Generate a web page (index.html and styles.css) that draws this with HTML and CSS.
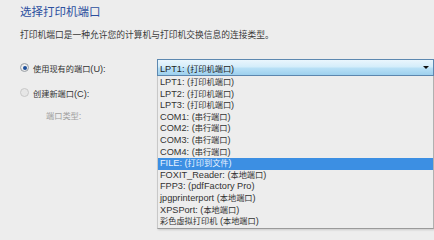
FILE: index.html
```html
<!DOCTYPE html>
<html lang="zh-CN">
<head>
<meta charset="utf-8">
<link rel="stylesheet" href="styles.css">
</head>
<body>
<div class="page">
  <h1 class="title">选择打印机端口</h1>
  <p class="desc">打印机端口是一种允许您的计算机与打印机交换信息的连接类型。</p>
  <div class="form">
    <div class="left">
      <div class="row row-first"><span class="radio checked"></span><span class="label"><span class="cj">使用现有的端口</span>(U):</span></div>
      <div class="row row-second"><span class="radio"></span><span class="label"><span class="cj">创建新端口</span>(C):</span></div>
      <div class="row-type"><span class="cj">端口类型</span>:</div>
    </div>
    <div class="right">
      <div class="combo"><span class="combo-text">LPT1: (<span class="cj">打印机端口</span>)</span><span class="arrow"></span></div>
      <ul class="list">
        <li>LPT1: (<span class="cj">打印机端口</span>)</li>
        <li>LPT2: (<span class="cj">打印机端口</span>)</li>
        <li>LPT3: (<span class="cj">打印机端口</span>)</li>
        <li>COM1: (<span class="cj">串行端口</span>)</li>
        <li>COM2: (<span class="cj">串行端口</span>)</li>
        <li>COM3: (<span class="cj">串行端口</span>)</li>
        <li>COM4: (<span class="cj">串行端口</span>)</li>
        <li class="sel">FILE: (<span class="cj">打印到文件</span>)</li>
        <li>FOXIT_Reader: (<span class="cj">本地端口</span>)</li>
        <li>FPP3: (pdfFactory Pro)</li>
        <li>jpgprinterport (<span class="cj">本地端口</span>)</li>
        <li>XPSPort: (<span class="cj">本地端口</span>)</li>
        <li><span class="cj">彩色虚拟打印机</span> (<span class="cj">本地端口</span>)</li>
      </ul>
    </div>
  </div>
</div>
</body>
</html>
```
FILE: styles.css
```css
* { box-sizing: border-box; }
html, body { margin: 0; padding: 0; }
body {
  width: 434px;
  height: 240px;
  overflow: hidden;
  background: #ededed;
  font-family: "Liberation Sans", "Noto Sans CJK SC", sans-serif;
  color: #333;
}
.page {
  padding: 4px 0 0 20px;
}
.title {
  margin: 0;
  font-size: 11.5px;
  line-height: 16px;
  font-weight: normal;
  color: #2c509f;
}
.desc {
  margin: 9px 0 0;
  font-size: 8.75px;
  line-height: 12px;
  color: #3a3a3a;
}
.cj {
  font-size: 8.2px;
}
.form {
  display: flex;
  margin-top: 18px;
}
.left {
  width: 137px;
  display: flex;
  flex-direction: column;
}
.row {
  display: flex;
  align-items: center;
  height: 17px;
  font-size: 9.2px;
  color: #333;
}
.row-second { margin-top: 8px; }
.radio {
  width: 9px;
  height: 9px;
  border-radius: 50%;
  border: 1px solid #9aa0a6;
  background: radial-gradient(circle, #ffffff 0%, #dcdcdc 100%);
  margin-right: 4px;
  position: relative;
  flex: none;
}
.radio.checked::after {
  content: "";
  position: absolute;
  left: 1.5px;
  top: 1.5px;
  width: 4px;
  height: 4px;
  border-radius: 50%;
  background: #1d4f9a;
}
.row-second .radio {
  border-color: #c8c8c8;
  background: #e6e6e6;
}
.row-type {
  margin-top: 9px;
  padding-left: 26px;
  font-size: 9.2px;
  line-height: 12px;
  color: #a0a0a0;
}
.right {
  flex: 1;
  display: flex;
  flex-direction: column;
}
.combo {
  height: 17px;
  display: flex;
  align-items: center;
  justify-content: space-between;
  padding: 0 4px 0 2px;
  border: 1px solid #5d88b0;
  background: linear-gradient(#eaf6fd 0%, #d4edfa 45%, #b8e0f6 55%, #9dd0ee 100%);
  font-size: 9.2px;
  color: #1e1e1e;
}
.arrow {
  width: 0;
  height: 0;
  border-left: 3px solid transparent;
  border-right: 3px solid transparent;
  border-top: 3px solid #111;
}
.list {
  margin: 0;
  padding: 1px 0 0;
  list-style: none;
  border-left: 1px solid #c8c8c8;
  border-bottom: 1px solid #9a9a9a;
  border-right: 1px solid #b0b0b0;
  box-shadow: 1px 1px 2px rgba(0,0,0,0.15);
}
.list li {
  height: 11.6px;
  line-height: 11.6px;
  font-size: 9.2px;
  padding-left: 2px;
  color: #333;
  white-space: nowrap;
}
.list li.sel {
  background: #3c8fe3;
  color: #e8f2ff;
}
```
